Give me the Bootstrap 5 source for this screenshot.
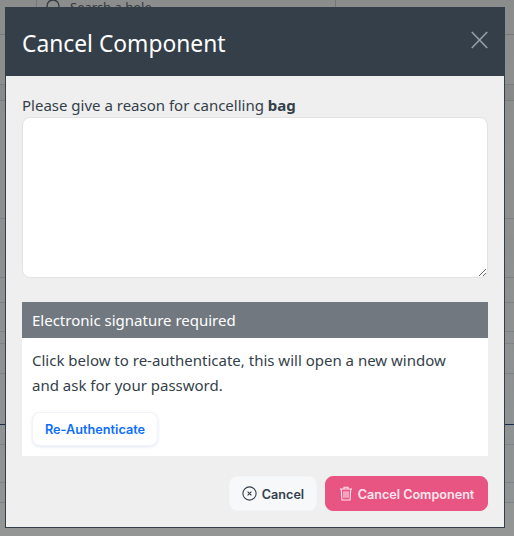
<!DOCTYPE html>
<html lang="en">
<head>
<meta charset="utf-8">
<title>Cancel Component</title>
<link rel="stylesheet" href="https://cdn.jsdelivr.net/npm/bootstrap@5.3.0/dist/css/bootstrap.min.css">
<style>
html,body{height:536px;overflow:hidden;}
body{background:#fff;font-family:"Noto Sans","Open Sans",sans-serif;color:#343f4a;}
.pg-search{height:35px;border-bottom:1px solid #d5d8dc;padding-left:36px;background:#f8f9fa;}
.pg-box{width:300px;height:34px;border-left:1px solid #ced4da;border-right:1px solid #ced4da;padding-left:9px;gap:10px;color:#5d6875;font-size:13px;line-height:16px;}
.pg-box svg{margin-top:-1px;}
.pg-box span{margin-top:-1px;}
.pg-row{border-bottom:1px solid #dcdfe3;background:#fafbfb;}
.pg-h50{height:50px}.pg-h16{height:16px;background:#f0f1f2}.pg-h118{height:118px}.pg-h59{height:59px}
.pg-h25{height:25px}.pg-h29{height:29px}.pg-h12{height:12px}.pg-h30{height:30px}.pg-h51{height:51px}
.pg-h20{height:20px}.pg-h38{height:38px}
.pg-blue{border-bottom:1px solid #1f3a78;}
.dim{position:fixed;inset:0;background:linear-gradient(#00000070,#1a1f1f78);z-index:1050;}
.modal.dlg{display:block;position:fixed;inset:0;z-index:1055;overflow:hidden;}
.dlg .modal-dialog{width:500px;max-width:500px;margin:7px 0 0 5px;}
.dlg .modal-content{height:521px;border:1px solid #343f4a;border-top:0;border-radius:0;background:#efefef;display:block;}
.dlg .modal-header{height:69px;background:#343f4a;border:0;border-radius:0;padding:0 17px 0 17px;margin:0 -1px;}
.dlg .modal-title{font-size:22.8px;font-weight:400;color:#fff;line-height:32px;margin-top:5px;}
.xbtn{background:none;border:0;padding:0;width:17px;height:18px;line-height:0;margin-top:-3px;}
.dlg .modal-body{padding:18px 16px 0 16px;}
.reason{font-size:15px;line-height:22px;margin-bottom:0;display:block;height:23px;}
.reason b{font-weight:700;}
.dlg textarea.form-control{height:161px;border:1px solid #e3e3e3;border-radius:8px;background:#fff;box-shadow:none;padding:6px 12px;}
.sig{margin-top:24px;background:#fff;height:154px;}
.sig-head{height:36px;background:#71787f;color:#fff;font-size:15px;line-height:36px;padding-left:10px;}
.sig-text{padding:10px 36px 0 10px;font-size:15px;line-height:25px;margin:0;height:74px;}
.sig-btn-wrap{padding-left:10px;}
.btn.reauth{height:34px;width:126px;padding:1px 0 0;background:#fff;border:1px solid #f1f3f8;border-radius:8px;color:#0d6efd;font:600 12.7px/32px Inter,sans-serif;box-shadow:0 1px 3px #2a4fa022;}
.foot{gap:8px;margin-top:20px;justify-content:flex-end;}
.btn.ghost,.btn.hot{height:35px;border-radius:8px;font:600 12.6px/33px Inter,sans-serif;padding:2px 0 0;display:flex;align-items:center;justify-content:center;gap:5px;}
.btn.ghost{width:88px;background:#f6f8fa;border:1px solid #f3f5f7;color:#343f4a;}
.btn.hot{width:163px;background:#e95583;border:1px solid #e95583;color:#fde6ee;}
.btn.ghost svg,.btn.hot svg{margin-top:-2px;}
</style>
</head>
<body>
<div class="pg-search">
  <div class="pg-box d-flex align-items-start">
    <svg width="14" height="14" viewBox="0 0 14 14" fill="none" stroke="#5d6875" stroke-width="1.3"><circle cx="7" cy="7" r="6"/></svg>
    <span>Search a hole</span>
  </div>
</div>
<div class="pg-row pg-h50"></div>
<div class="pg-row pg-h16"></div>
<div class="pg-row pg-h118"></div>
<div class="pg-row pg-h59"></div>
<div class="pg-row pg-h25"></div>
<div class="pg-row pg-h29"></div>
<div class="pg-row pg-h12"></div>
<div class="pg-row pg-h30"></div>
<div class="pg-row pg-h51 pg-blue"></div>
<div class="pg-row pg-h20"></div>
<div class="pg-row pg-h38"></div>
<div class="pg-row pg-h20"></div>

<div class="dim"></div>
<div class="modal dlg" tabindex="-1" role="dialog">
  <div class="modal-dialog">
    <div class="modal-content">
      <div class="modal-header d-flex align-items-center justify-content-between">
        <h5 class="modal-title">Cancel Component</h5>
        <button type="button" class="xbtn" aria-label="Close">
          <svg width="17" height="18" viewBox="0 0 17 18" fill="none" stroke="#969da3" stroke-width="1.7"><path d="M.8 1 16.2 17M16.2 1 .8 17"/></svg>
        </button>
      </div>
      <div class="modal-body">
        <label class="reason" for="why">Please give a reason for cancelling <b>bag</b></label>
        <textarea class="form-control" id="why"></textarea>
        <div class="sig">
          <div class="sig-head">Electronic signature required</div>
          <p class="sig-text">Click below to re-authenticate, this will open a new window and ask for your password.</p>
          <div class="sig-btn-wrap"><button type="button" class="btn reauth">Re-Authenticate</button></div>
        </div>
        <div class="foot d-flex">
          <button type="button" class="btn ghost">
            <svg width="15" height="15" viewBox="0 0 15 15" fill="none" stroke="#343f4a" stroke-width="1.1"><circle cx="7.5" cy="7.5" r="6.6"/><path d="M5.6 5.6l3.8 3.8M9.4 5.6l-3.8 3.8"/></svg>
            Cancel
          </button>
          <button type="button" class="btn hot">
            <svg width="14" height="15" viewBox="0 0 14 15" fill="none" stroke="#fde6ee" stroke-width="1.1"><path d="M1 3h12M5 3V1.2h4V3M2.3 3l.6 11h8.2l.6-11M5 5.3v6.5M7 5.3v6.5M9 5.3v6.5"/></svg>
            Cancel Component
          </button>
        </div>
      </div>
    </div>
  </div>
</div>
<script src="https://cdn.jsdelivr.net/npm/bootstrap@5.3.0/dist/js/bootstrap.bundle.min.js"></script>
</body>
</html>
